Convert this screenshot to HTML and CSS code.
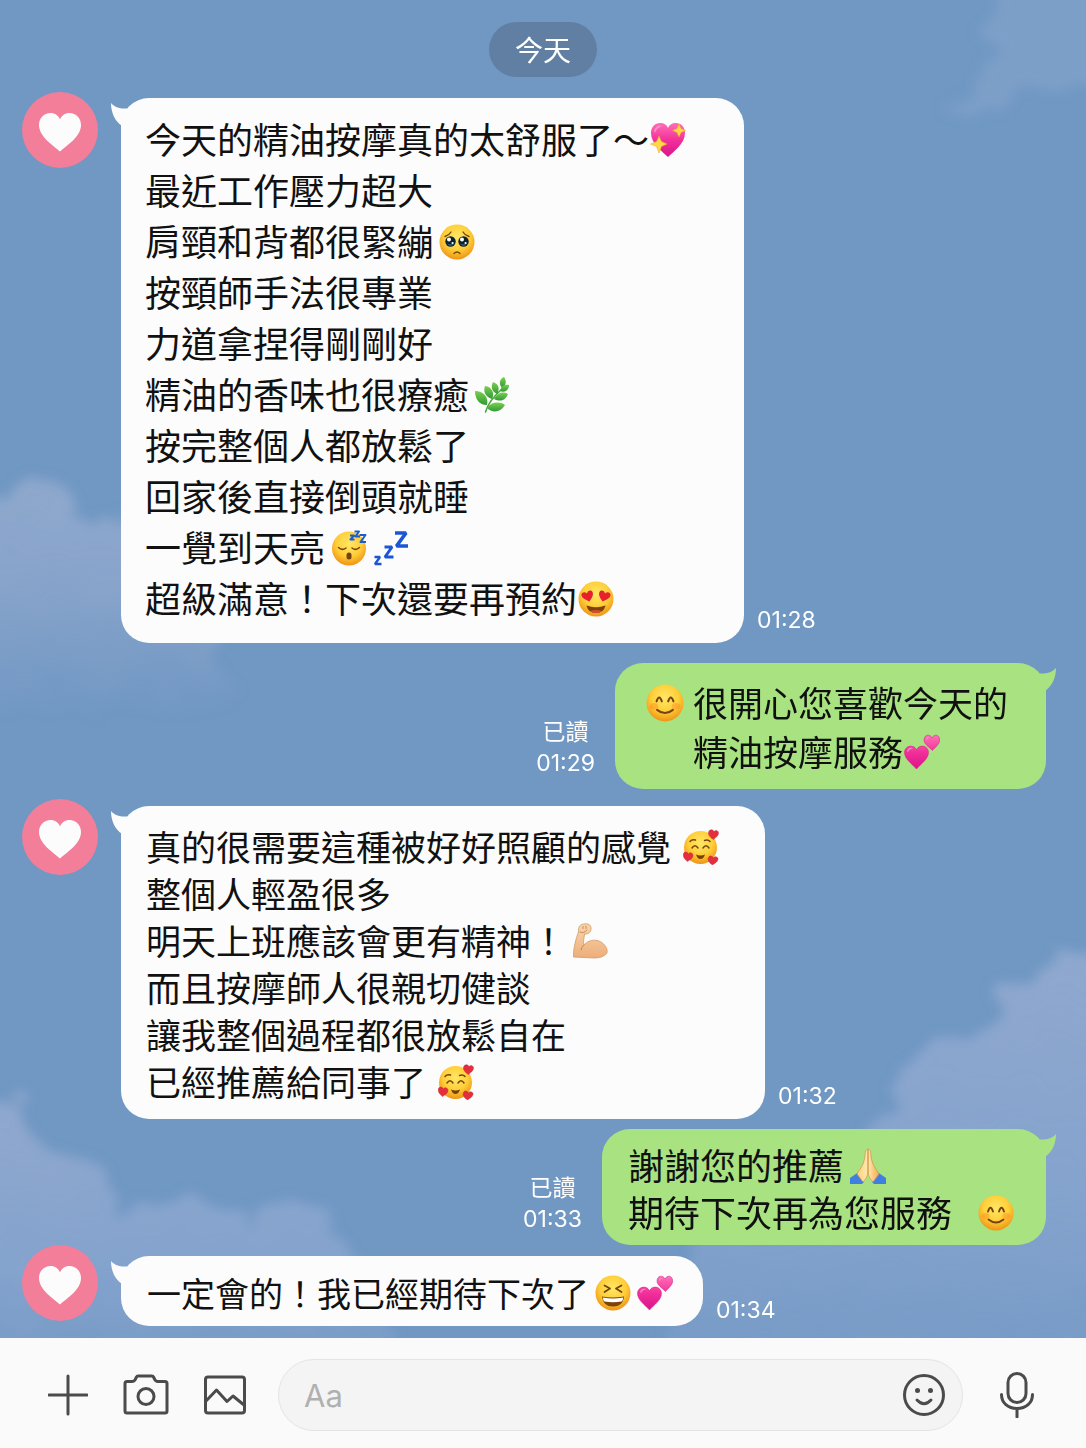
FILE: index.html
```html
<!DOCTYPE html>
<html lang="zh-Hant">
<head>
    <meta charset="UTF-8">
    <meta name="viewport" content="width=device-width, initial-scale=1">
    <title>聊天</title>
    <link rel="stylesheet" href="styles.css">
</head>
<body>
    <!-- shared drawings -->
    <svg class="defs" aria-hidden="true">
        <defs>
            <radialGradient id="face" cx="50%" cy="36%" r="66%">
                <stop offset="0" stop-color="#ffe766"/>
                <stop offset="0.55" stop-color="#ffcf3a"/>
                <stop offset="1" stop-color="#ee8f12"/>
            </radialGradient>
            <linearGradient id="pink" x1="0" y1="0" x2="0" y2="1">
                <stop offset="0" stop-color="#ff6fb5"/>
                <stop offset="0.5" stop-color="#f2309a"/>
                <stop offset="1" stop-color="#d9148a"/>
            </linearGradient>
            <linearGradient id="skin" x1="0" y1="0" x2="0" y2="1">
                <stop offset="0" stop-color="#fad6ab"/>
                <stop offset="1" stop-color="#ecae7a"/>
            </linearGradient>
            <linearGradient id="leaf" x1="0" y1="0" x2="0" y2="1">
                <stop offset="0" stop-color="#7ccf4e"/>
                <stop offset="1" stop-color="#2f9a35"/>
            </linearGradient>
            <linearGradient id="praying" x1="0" y1="0" x2="1" y2="0">
                <stop offset="0" stop-color="#ffcf78"/>
                <stop offset="0.5" stop-color="#ffe9b4"/>
                <stop offset="1" stop-color="#f5a94e"/>
            </linearGradient>
        </defs>
        <symbol id="heart-shape" viewBox="0 0 44 40">
            <path d="M22 39.500C16 34 1 25 1 13 1 6 6 1 12.500 1 17 1 20.500 3.500 22 7.500 23.500 3.500 27 1 31.500 1 38 1 43 6 43 13 43 25 28 34 22 39.500Z"/>
        </symbol>
        <symbol id="tail" viewBox="0 0 30 30">
            <path d="M1 5C5 9.500 10 11 17 10.500L28 14 22 28H12C5 23 1 15 1 5Z"/>
        </symbol>
        <symbol id="e-sparkle-heart" viewBox="0 0 36 36">
            <path fill="url(#pink)" d="M18 35C13 30 1 22 1 11 1 5 5 1 10 1 14 1 17 3 18 6 19 3 22 1 26 1 31 1 35 5 35 11 35 22 23 30 18 35Z"/>
            <path fill="#ffa6d4" opacity=".7" d="M4 9C5 5 8 3 12 4 9 5 6 7 5 11Z"/>
            <path fill="#ffd84a" stroke="#f2a524" stroke-width=".5" d="M9 14 11.500 19.500 17 22 11.500 24.500 9 31 6.500 24.500 0.500 22 6.500 19.500ZM29 2 31 6.500 35.500 8.500 31 10.500 29 15 27 10.500 22.500 8.500 27 6.500Z"/>
        </symbol>
        <symbol id="e-pleading" viewBox="0 0 36 36">
            <circle cx="18" cy="18" r="17.500" fill="url(#face)"/>
            <g fill="none" stroke="#74430d" stroke-width="1.300" stroke-linecap="round">
                <path d="M6 12.500Q10 11.500 12 8M30 12.500Q26 11.500 24 8M15 29.500Q18 26.500 21 29.500"/>
            </g>
            <circle cx="11.500" cy="17.500" r="5.200" fill="#0d2230"/><circle cx="24.500" cy="17.500" r="5.200" fill="#0d2230"/>
            <path fill="#2d7594" d="M8 19.500Q11.500 24 15 19.500 11.500 21.500 8 19.500ZM21 19.500Q24.500 24 28 19.500 24.500 21.500 21 19.500Z"/>
            <g fill="#fff"><circle cx="10" cy="15.500" r="2"/><circle cx="23" cy="15.500" r="2"/><circle cx="13.600" cy="19" r="1.100"/><circle cx="26.600" cy="19" r="1.100"/></g>
        </symbol>
        <symbol id="e-herb" viewBox="0 0 36 36">
            <path fill="none" stroke="#4ba23d" stroke-width="1.500" stroke-linecap="round" d="M10.500 35C12 29 18 20 27 12"/>
            <g fill="url(#leaf)">
                <path d="M27 11C23 6 25 2 29 0 32 4 31 9 27 11Z"/>
                <path d="M25 14C26 9 30 7 34 8 34 13 30 16 25 14Z"/>
                <path d="M22 17C16 14 16 9 18 5 24 7 25 12 22 17Z"/>
                <path d="M17 22C10 20 8 14 10 9 17 10 20 16 17 22Z"/>
                <path d="M12 28C4 28 0 22 0 14 8 14 14 20 12 28Z"/>
                <path d="M19 22C22 16 28 14 33 17 30 24 25 25 19 22Z"/>
                <path d="M12 31C16 25 24 24 30 28 25 36 17 36 12 31Z"/>
            </g>
        </symbol>
        <symbol id="e-sleeping" viewBox="0 0 36 36">
            <circle cx="18" cy="18.500" r="17" fill="url(#face)"/>
            <g fill="none" stroke="#74430d" stroke-width="1.500" stroke-linecap="round"><path d="M7.500 17.500Q11 21 15 18M21 18Q25 21 28.500 17.500"/></g>
            <rect x="15.500" y="22.500" width="5" height="7" rx="2.500" fill="#74430d"/>
            <g fill="none" stroke="#1d5fc9" stroke-width="2" stroke-linejoin="round"><path d="M19 5.500H23L19.500 9.500H23.500M23.500 1.500H28L24.500 6.500H29M28.500 5H34.500L29.500 12H35"/></g>
        </symbol>
        <symbol id="e-zzz" viewBox="0 0 36 36">
            <g fill="none" stroke="#1c56d6" stroke-linejoin="bevel">
                <path stroke-width="3.600" d="M22 3H33L23.500 16H35"/>
                <path stroke-width="3" d="M11.500 17H19L12 27H20.500"/>
                <path stroke-width="2.400" d="M1.500 27H7L2 34H8.500"/>
            </g>
        </symbol>
        <symbol id="e-heart-eyes" viewBox="0 0 36 36">
            <circle cx="18" cy="18" r="17.500" fill="url(#face)"/>
            <path fill="#e6202f" d="M11.500 20.500C7 18.500 3 16.500 3.500 13.500 4 11 7 10.500 9 12.500 9.500 9.500 13 8.500 14.500 11 16 14 13.500 17.500 11.500 20.500ZM24.500 20.500C29 18.500 33 16.500 32.500 13.500 32 11 29 10.500 27 12.500 26.500 9.500 23 8.500 21.500 11 20 14 22.500 17.500 24.500 20.500Z"/>
            <path fill="#7d4208" d="M8.500 24.500Q18 28 27.500 24.500 26 32 18 32 10 32 8.500 24.500Z"/>
            <path fill="#d64b31" d="M12 30Q18 28 24 30 21.500 32 18 32 14.500 32 12 30Z"/>
        </symbol>
        <symbol id="e-smile" viewBox="0 0 36 36">
            <circle cx="18" cy="18" r="17.500" fill="url(#face)"/>
            <ellipse cx="7.500" cy="21" rx="4" ry="3" fill="#ff8424" opacity=".4"/><ellipse cx="28.500" cy="21" rx="4" ry="3" fill="#ff8424" opacity=".4"/>
            <g fill="none" stroke="#74430d" stroke-width="1.900" stroke-linecap="round"><path d="M10 16.500Q12.500 9 15 16.500M21 16.500Q23.500 9 26 16.500M10.500 24.500Q18 30.500 25.500 24.500"/></g>
        </symbol>
        <symbol id="e-two-hearts" viewBox="0 0 36 36">
            <path fill="url(#pink)" stroke="#d01b86" stroke-width=".5" d="M12.500 35C8 30 .500 25 .500 18.500 .500 12 9 9.500 12.500 15.500 16 9.500 24.500 12 24.500 18.500 24.500 25 17 30 12.500 35ZM28.500 16.500C25 13 20 10 20 6 20 .500 26 -.500 28 4 30 -.500 35.700 .500 35.700 6 35.700 10 31 13.500 28.500 16.500Z"/>
            <path fill="#ffb3da" opacity=".7" d="M3 17Q5 13 9 14 5 15 4 18ZM22 5Q23 2.500 25.500 3 23 4 22.500 6Z"/>
        </symbol>
        <symbol id="e-loved" viewBox="0 0 36 36">
            <circle cx="17.500" cy="18.500" r="16.500" fill="url(#face)"/>
            <g fill="none" stroke="#74430d" stroke-width="1.500" stroke-linecap="round"><path d="M7 12.500Q9 10 12.500 11M21.500 11.500Q25 10 27 12.500M9 19Q12 14.500 15 19M20 19Q23 14.500 26 19"/></g>
            <path fill="#74430d" d="M13 25.500Q17.500 27.500 22 25.500 20.500 30 17.500 30 14.500 30 13 25.500Z"/>
            <path fill="#e32f3d" stroke="#c51f2e" stroke-width=".4" d="M30.500 10.500C26 8 24.500 4.500 26 2 27.500 0 30 .500 31 2.500 32.500 .500 35.500 1.500 35.500 4 35.500 7 32.500 8.500 30.500 10.500ZM4.500 32.500C1 30 -.500 27 .500 24.500 1.500 22.500 4 22.500 5.500 25 7 22.500 10 24 10 26.500 10 29.500 6.500 31 4.500 32.500ZM29.500 36C25.500 33.500 24.500 31 25.500 28.500 26.500 26.500 29 26.500 30.500 29 32 26.500 35.500 28 35 30.500 34.500 33 31.500 34.500 29.500 36Z"/>
        </symbol>
        <symbol id="e-muscle" viewBox="0 0 36 36">
            <path fill="url(#skin)" stroke="#d39a66" stroke-width=".8" stroke-linejoin="round" d="M1.500 34C1 27 4 15 6.500 9 6 4 8 1 12 1 16 0 19 2 19 5 19.500 9 16 11.500 12.500 11 12 15 11 19 12 22 16 17 23 16 28 18.500 33 21 36 26 35 30 32 34 27 35 22 35Z"/>
            <path fill="none" stroke="#b97c4c" stroke-width=".8" stroke-linecap="round" d="M11 5.500V3.500M14 5.500V3M8 9Q12 11 15 7M12 22Q9 24 9 27"/>
        </symbol>
        <symbol id="e-pray" viewBox="0 0 36 36">
            <path fill="#3f7fe0" d="M0 30 8 24.500 14 34 12 36H0ZM36 30 28 24.500 22 34 24 36H36Z"/>
            <path fill="url(#praying)" stroke="#dd8f42" stroke-width=".7" d="M17.700 1C15 1 15.500 6 14.500 11 13.500 17 10 21 7 26L13 34C16 31 17.700 28 17.700 24ZM18.300 1C21 1 20.500 6 21.500 11 22.500 17 26 21 29 26L23 34C20 31 18.300 28 18.300 24Z"/>
        </symbol>
        <symbol id="e-laugh" viewBox="0 0 36 36">
            <circle cx="18" cy="18" r="17.500" fill="url(#face)"/>
            <g fill="none" stroke="#74430d" stroke-width="1.700" stroke-linecap="round" stroke-linejoin="round"><path d="M9.500 10.500 15 13.500 9.500 17M26.500 10.500 21 13.500 26.500 17"/></g>
            <path fill="#7d4208" d="M7 21.500Q18 23.500 29 21.500 28 31.500 18 31.500 8 31.500 7 21.500Z"/>
            <path fill="#fff" d="M8 22.500Q18 24.500 28 22.500 28 26 26.500 26.500 18 28 9.500 26.500 8 26 8 22.500Z"/>
        </symbol>
    </svg>

    <main class="chat">
        <svg class="sky" viewBox="0 0 1086 1338" preserveAspectRatio="none" aria-hidden="true">
            <defs>
                <filter id="puff" filterUnits="userSpaceOnUse" x="-60" y="-60" width="1206" height="1458">
                    <feTurbulence type="fractalNoise" baseFrequency="0.025" numOctaves="5" seed="8" result="noise"/>
                    <feDisplacementMap in="SourceGraphic" in2="noise" scale="50" xChannelSelector="R" yChannelSelector="G"/>
                    <feGaussianBlur stdDeviation="6"/>
                </filter>
                <linearGradient id="fade" x1="0" y1="0" x2="0" y2="1">
                    <stop offset="0" stop-color="#97accf" stop-opacity=".8"/>
                    <stop offset="0.4" stop-color="#93a9cf" stop-opacity=".7"/>
                    <stop offset="0.9" stop-color="#93a9cf" stop-opacity="0"/>
                </linearGradient>
                <linearGradient id="bank" x1="0" y1="0" x2="0" y2="1">
                    <stop offset="0" stop-color="#97abd0" stop-opacity=".85"/>
                    <stop offset="0.6" stop-color="#8fa9d2" stop-opacity=".65"/>
                    <stop offset="1" stop-color="#8ba6d0" stop-opacity=".2"/>
                </linearGradient>
            </defs>
            <g filter="url(#puff)">
                <path fill="#8fa9d0" opacity=".4" d="M1010 -30 985 20 1000 55 960 85 935 115 1000 105 1050 85 1120 90V-30Z"/>
                <path fill="url(#fade)" d="M-40 500 0 490 30 475 60 490 80 520 110 520 150 530 230 600 230 740 -40 740Z"/>
                <path fill="url(#bank)" d="M1140 935 1086 950 1040 970 1000 990 985 1030 950 1040 910 1060 890 1100 860 1140 760 1210 690 1260 660 1380H1140Z"/>
                <path fill="url(#bank)" d="M-40 1095 20 1110 45 1140 85 1160 110 1190 125 1220 190 1195 240 1215 310 1200 350 1250 400 1380H-40Z"/>
            </g>
        </svg>

        <time class="day">今天</time>

        <div class="row row-first">
            <div class="avatar"><svg><use href="#heart-shape"/></svg></div>
            <div class="bubble bubble-long">
                <svg class="tail" aria-hidden="true"><use href="#tail"/></svg>
                <p>今天的精油按摩真的太舒服了～<svg class="emoji tight" role="img" aria-label="💖"><use href="#e-sparkle-heart"/></svg></p>
                <p>最近工作壓力超大</p>
                <p>肩頸和背都很緊繃<svg class="emoji" role="img" aria-label="🥺"><use href="#e-pleading"/></svg></p>
                <p>按頸師手法很專業</p>
                <p>力道拿捏得剛剛好</p>
                <p>精油的香味也很療癒<svg class="emoji" role="img" aria-label="🌿"><use href="#e-herb"/></svg></p>
                <p>按完整個人都放鬆了</p>
                <p>回家後直接倒頭就睡</p>
                <p>一覺到天亮<svg class="emoji" role="img" aria-label="😴"><use href="#e-sleeping"/></svg><svg class="emoji" role="img" aria-label="💤"><use href="#e-zzz"/></svg></p>
                <p>超級滿意！下次還要再預約<svg class="emoji tight" role="img" aria-label="😍"><use href="#e-heart-eyes"/></svg></p>
            </div>
            <div class="meta"><time>01:28</time></div>
        </div>

        <div class="row sent">
            <div class="meta"><span>已讀</span><time>01:29</time></div>
            <div class="bubble bubble-thanks">
                <svg class="tail" aria-hidden="true"><use href="#tail"/></svg>
                <svg class="emoji lead" role="img" aria-label="😊"><use href="#e-smile"/></svg>
                <div>
                    <p>很開心您喜歡今天的</p>
                    <p>精油按摩服務<svg class="emoji tight" role="img" aria-label="💕"><use href="#e-two-hearts"/></svg></p>
                </div>
            </div>
        </div>

        <div class="row">
            <div class="avatar"><svg><use href="#heart-shape"/></svg></div>
            <div class="bubble">
                <svg class="tail" aria-hidden="true"><use href="#tail"/></svg>
                <p>真的很需要這種被好好照顧的感覺<svg class="emoji wide" role="img" aria-label="🥰"><use href="#e-loved"/></svg></p>
                <p>整個人輕盈很多</p>
                <p>明天上班應該會更有精神！<svg class="emoji" role="img" aria-label="💪"><use href="#e-muscle"/></svg></p>
                <p>而且按摩師人很親切健談</p>
                <p>讓我整個過程都很放鬆自在</p>
                <p>已經推薦給同事了<svg class="emoji wide" role="img" aria-label="🥰"><use href="#e-loved"/></svg></p>
            </div>
            <div class="meta"><time>01:32</time></div>
        </div>

        <div class="row row-close sent">
            <div class="meta"><span>已讀</span><time>01:33</time></div>
            <div class="bubble bubble-invite">
                <svg class="tail" aria-hidden="true"><use href="#tail"/></svg>
                <p>謝謝您的推薦<svg class="emoji" role="img" aria-label="🙏"><use href="#e-pray"/></svg></p>
                <p>期待下次再為您服務<svg class="emoji wider" role="img" aria-label="😊"><use href="#e-smile"/></svg></p>
            </div>
        </div>

        <div class="row row-close">
            <div class="avatar"><svg><use href="#heart-shape"/></svg></div>
            <div class="bubble bubble-short">
                <svg class="tail" aria-hidden="true"><use href="#tail"/></svg>
                <p>一定會的！我已經期待下次了<svg class="emoji" role="img" aria-label="😆"><use href="#e-laugh"/></svg><svg class="emoji" role="img" aria-label="💕"><use href="#e-two-hearts"/></svg></p>
            </div>
            <div class="meta meta-low"><time>01:34</time></div>
        </div>
    </main>

    <form class="composer">
        <div class="tools">
            <button type="button" aria-label="更多"><svg width="40" height="46" viewBox="0 0 40 46"><path d="M20 4V42M1 23H39"/></svg></button>
            <button type="button" aria-label="相機"><svg width="46" height="46" viewBox="0 0 46 46"><path d="M4 9.500H9Q11.500 9.500 12.500 7L13.500 5Q14 4 15 4H29Q30 4 30.500 5L31.500 7Q32.500 9.500 35 9.500H42Q44 9.500 44 11.500V39Q44 41 42 41H4Q2 41 2 39V11.500Q2 9.500 4 9.500Z"/><circle cx="23" cy="24.500" r="8"/></svg></button>
            <button type="button" aria-label="相片"><svg width="42" height="46" viewBox="0 0 42 46"><rect x="1.500" y="5" width="39" height="36" rx="2.500"/><path d="M2 29 12.500 18 23 29.500 29 24 40 33"/></svg></button>
        </div>
        <div class="field">
            <input type="text" placeholder="Aa" aria-label="輸入訊息">
            <button type="button" aria-label="貼圖"><svg width="44" height="44" viewBox="0 0 44 44"><circle cx="22" cy="22" r="19.500"/><path d="M15 27Q22 34.500 29 27"/><circle class="dot" cx="15.500" cy="17.500" r="2.500"/><circle class="dot" cx="28.500" cy="17.500" r="2.500"/></svg></button>
        </div>
        <button type="button" aria-label="語音"><svg width="44" height="46" viewBox="0 0 44 46"><rect x="13" y="1.500" width="18" height="29" rx="9"/><path d="M6.500 22.500C6.500 31 13 36.500 22 36.500S37.500 31 37.500 22.500M22 36.500V45"/></svg></button>
    </form>
</body>
</html>
```
FILE: styles.css
```css
* {
    box-sizing: border-box;
}
body {
    display: flex;
    flex-direction: column;
    min-height: 100vh;
    margin: 0;
    font-family: "Noto Sans CJK TC", sans-serif;
    color: #111;
    background-color: #7098c3;
}
p {
    margin: 0;
}
button {
    display: flex;
    padding: 0;
    border: none;
    background: none;
    cursor: pointer;
}
.defs {
    position: absolute;
    width: 0;
    height: 0;
}

/* conversation */
.chat {
    position: relative;
    flex: 1;
    display: flex;
    flex-direction: column;
    padding: 22px 40px 11px 22px;
    overflow: hidden;
}
.sky {
    position: absolute;
    top: 0;
    left: 0;
    width: 100%;
    height: 100%;
}
.day {
    position: relative;
    align-self: center;
    margin: 0 0 15px 18px;
    padding: 0 26px;
    border-radius: 28px;
    font-size: 28px;
    line-height: 55px;
    color: #fff;
    background-color: #617fa3;
}
.row {
    position: relative;
    display: flex;
    align-items: flex-end;
    margin-bottom: 10px;
}
.row-first {
    margin-bottom: 20px;
}
.row-close {
    margin-bottom: 0;
}
.sent {
    justify-content: flex-end;
}
.avatar {
    display: flex;
    flex: none;
    align-items: center;
    justify-content: center;
    align-self: flex-start;
    width: 76px;
    height: 76px;
    margin-right: 23px;
    border-radius: 50%;
    background-color: #f27e9a;
}
.avatar svg {
    width: 44px;
    height: 40px;
    margin-top: 4px;
    fill: #fcfcfc;
}

/* bubbles */
.bubble {
    position: relative;
    margin-top: 7px;
    padding: 16px 46px 15px 25px;
    border-radius: 28px;
    font-size: 35px;
    line-height: 47px;
    background-color: #fcfcfc;
}
.bubble-long {
    margin-top: 6px;
    padding: 15px 58px 20px 24px;
    font-size: 36px;
    line-height: 51px;
}
.bubble-short {
    margin-top: 11px;
    padding: 14px 30px 10px 26px;
    font-size: 34px;
    line-height: 46px;
}
.sent .bubble {
    margin-top: 0;
    background-color: #a9e281;
}
.sent .bubble-thanks {
    display: flex;
    padding: 14px 38px 14px 31px;
    line-height: 49px;
}
.sent .bubble-invite {
    padding: 12px 32px 10px 26px;
    font-size: 36px;
    line-height: 47px;
}
.tail {
    position: absolute;
    top: 0;
    left: -11px;
    width: 30px;
    height: 30px;
    fill: #fcfcfc;
}
.sent .tail {
    left: auto;
    right: -11px;
    transform: scaleX(-1);
    fill: #a9e281;
}
.emoji {
    width: 36px;
    height: 36px;
    margin-left: 6px;
    vertical-align: -4px;
}
.tight {
    margin-left: 1px;
}
.wide {
    margin-left: 12px;
}
.wider {
    margin-left: 26px;
}
.lead {
    width: 38px;
    height: 38px;
    margin: 7px 9px 0 0;
}
.meta {
    display: flex;
    flex-direction: column;
    align-items: center;
    padding: 0 13px 7px;
    font-family: Inter, "Noto Sans CJK TC", sans-serif;
    font-size: 23px;
    line-height: 31px;
    color: #fff;
}
.sent .meta {
    padding: 0 20px 10px;
}
.meta-low {
    padding-bottom: 0;
}

/* message bar */
.composer {
    position: relative;
    display: flex;
    align-items: center;
    gap: 32px;
    padding: 21px 47px 17px 48px;
    background-color: #fafafa;
}
.composer svg {
    fill: none;
    stroke: #4b4b4b;
    stroke-width: 3;
    stroke-linecap: round;
    stroke-linejoin: round;
}
.composer .dot {
    fill: #4b4b4b;
    stroke: none;
}
.tools {
    display: flex;
    gap: 35px;
}
.field {
    display: flex;
    flex: 1;
    align-items: center;
    min-width: 0;
    height: 72px;
    padding: 0 16px 0 25px;
    border: 1px solid #e4e4e5;
    border-radius: 36px;
    background-color: #f4f4f4;
}
.field input {
    flex: 1;
    min-width: 0;
    padding: 0;
    border: none;
    outline: none;
    font-family: Inter, "Noto Sans CJK TC", sans-serif;
    font-size: 31px;
    background: none;
}
.field input::placeholder {
    color: #b0b0b0;
}
```
